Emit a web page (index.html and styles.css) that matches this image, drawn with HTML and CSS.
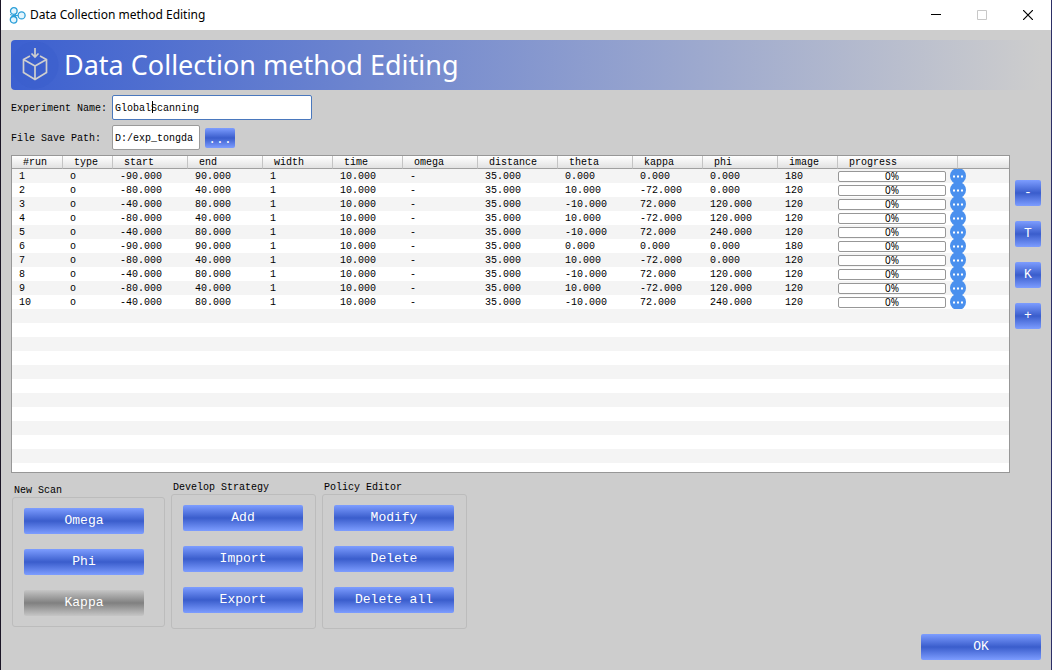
FILE: index.html
```
<!DOCTYPE html>
<html lang="en">
<head>
<meta charset="utf-8">
<title>Data Collection method Editing</title>
<link rel="stylesheet" href="styles.css">
</head>
<body>
<header class="titlebar">
  <svg class="app-icon" width="17" height="17" viewBox="0 0 17 17"><g fill="#e4f5fd" stroke="#2b9fd9" stroke-width="1.3"><circle cx="4.800" cy="4" r="3.300"/><circle cx="4.600" cy="12.800" r="3.300"/><circle cx="12.600" cy="8.400" r="3.500"/></g><path d="M1 7.500 4 8.500 2.500 10M4 8.500h5M6 7.200 7.500 8.500 6 9.800" fill="none" stroke="#2b9fd9"/></svg>
  <span class="app-name">Data Collection method Editing</span>
  <button class="win-btn" type="button" aria-label="Minimize"><svg width="10" height="10" viewBox="0 0 10 10"><path d="M0 4.500h10" stroke="#000"/></svg></button>
  <button class="win-btn" type="button" aria-label="Maximize" disabled><svg width="10" height="10" viewBox="0 0 10 10"><path d="M.5.5h9v9h-9z" fill="none" stroke="#c8c8c8"/></svg></button>
  <button class="win-btn" type="button" aria-label="Close"><svg width="10" height="10" viewBox="0 0 10 10"><path d="M0 0 10 10M10 0 0 10" stroke="#000" stroke-width="1.2"/></svg></button>
</header>
<main class="content">
  <div class="banner">
    <svg class="banner-icon" width="48" height="48" viewBox="0 0 48 48"><circle cx="24" cy="24" r="23.500" fill="#3a5dcc" opacity=".5"/><g fill="none" stroke="#cfcfcf" stroke-width="1.700"><path d="M19 15 12.500 18.500v13L24 38.500l11.500-7v-13L29 15M12.500 18.500 24 25l11.500-6.500M24 25v13.500M24 7v9M20.500 12.500l3.500 3.500 3.500-3.500"/></g></svg>
    <h1 class="banner-title">Data Collection method Editing</h1>
  </div>
  <form class="fields">
    <label class="label" for="name">Experiment Name:</label>
    <span class="name-box"><input class="text name" id="name" type="text" value="GlobalScanning"><span class="caret"></span></span>
    <label class="label" for="path">File Save Path:</label>
    <span class="path-box"><input class="text path" id="path" type="text" value="D:/exp_tongda"><button class="btn browse" type="button" aria-label="Browse">...</button></span>
  </form>
  <div class="work">
    <div class="grid">
      <table class="runs">
        <colgroup><col class="c51"><col class="c50"><col class="c75"><col class="c75"><col class="c70"><col class="c70"><col class="c75"><col class="c80"><col class="c75"><col class="c70"><col class="c75"><col class="c60"><col class="c120"><col></colgroup>
        <thead><tr><th>#run</th><th>type</th><th>start</th><th>end</th><th>width</th><th>time</th><th>omega</th><th>distance</th><th>theta</th><th>kappa</th><th>phi</th><th>image</th><th>progress</th><th></th></tr></thead>
        <tbody id="rows"></tbody>
      </table>
    </div>
    <div class="side">
      <button class="btn square" type="button">-</button>
      <button class="btn square" type="button">T</button>
      <button class="btn square" type="button">K</button>
      <button class="btn square" type="button">+</button>
    </div>
  </div>
  <div class="bottom">
    <section class="group scan">
      <h2 class="group-title">New Scan</h2>
      <div class="group-box">
        <button class="btn wide" type="button">Omega</button>
        <button class="btn wide" type="button">Phi</button>
        <button class="btn wide" type="button" disabled>Kappa</button>
      </div>
    </section>
    <section class="group">
      <h2 class="group-title">Develop Strategy</h2>
      <div class="group-box">
        <button class="btn wide" type="button">Add</button>
        <button class="btn wide" type="button">Import</button>
        <button class="btn wide" type="button">Export</button>
      </div>
    </section>
    <section class="group">
      <h2 class="group-title">Policy Editor</h2>
      <div class="group-box">
        <button class="btn wide" type="button">Modify</button>
        <button class="btn wide" type="button">Delete</button>
        <button class="btn wide" type="button">Delete all</button>
      </div>
    </section>
    <button class="btn wide ok" type="button">OK</button>
  </div>
</main>
<script src="app.js"></script>
</body>
</html>
```
FILE: styles.css
```
* { box-sizing: border-box; }
body {
  margin: 0;
  min-height: 100vh;
  display: flex;
  flex-direction: column;
  background: #cdcdcd;
  border-left: 1px solid #1a1526;
  border-right: 1px solid #2c2f66;
  font: 10px/14px "Liberation Mono", monospace;
  color: #000;
}
button, input { font: inherit; color: inherit; }
svg { display: block; }

.titlebar {
  height: 30px;
  display: flex;
  align-items: center;
  background: #fff;
  padding-left: 8px;
  font: 12px/16px "Noto Sans", sans-serif;
}
.app-name { flex: 1; margin-left: 4px; }
.win-btn {
  width: 46px;
  height: 30px;
  padding: 0;
  border: 0;
  background: none;
  display: flex;
  align-items: center;
  justify-content: center;
}

.content {
  flex: 1;
  display: flex;
  flex-direction: column;
  padding: 10px;
}
.banner {
  height: 50px;
  display: flex;
  align-items: center;
  border-radius: 4px;
  background: linear-gradient(90deg, #3c60d0, #cdcdcd);
}
.banner-title {
  margin: 0 0 0 5px;
  font: 27px/36px "Noto Sans", sans-serif;
  color: #fff;
}

.fields {
  display: grid;
  grid-template-columns: 96px 1fr;
  align-items: center;
  gap: 5px;
  margin-top: 5px;
}
.label { padding-top: 2px; }
.name-box { position: relative; width: 200px; }
.path-box { display: flex; align-items: center; gap: 5px; }
.text {
  display: block;
  height: 25px;
  padding: 1px 2px 0;
  border: 1px solid #9a9a9a;
  border-radius: 2px;
  background: #fff;
  outline: 0;
}
.name { width: 100%; border-color: #4a78bd; }
.path { width: 88px; }
.caret {
  position: absolute;
  left: 40px;
  top: 6px;
  width: 1px;
  height: 12px;
  background: #000;
}

.btn {
  height: 26px;
  padding: 0;
  border: 0;
  border-radius: 2px;
  background: linear-gradient(#7d9dff, #3a5dcc 50%, #7d9dff);
  color: #fff;
  font-size: 13px;
  line-height: 26px;
  text-align: center;
}
.btn:disabled { background: linear-gradient(#c6c6c6, #808080 50%, #c6c6c6); }
.wide { width: 120px; }
.square { width: 26px; }
.browse { width: 30px; height: 20px; padding-top: 4px; line-height: 16px; }

.work { flex: 1; display: flex; gap: 5px; margin-top: 5px; }
.grid {
  flex: 1;
  border: 1px solid #979797;
  background: repeating-linear-gradient(#f4f4f4 0 14px, #fff 14px 28px) 0 13px;
  background-clip: padding-box;
}
.runs { width: 100%; table-layout: fixed; border-collapse: separate; border-spacing: 0; }
.runs th {
  height: 13px;
  padding: 1px 0 0 11px;
  border-right: 1px solid #c4c4c4;
  border-bottom: 1px solid #a0a0a0;
  background: linear-gradient(#fff, #e2e2e2);
  font-weight: normal;
  line-height: 11px;
  text-align: left;
}
.runs th:last-child { border-right: 0; }
.runs td { height: 14px; padding: 2px 0 0 7px; line-height: 12px; white-space: pre; }
.runs .progress-cell { padding: 0; }
.c50 { width: 50px; }
.c51 { width: 51px; }
.c60 { width: 60px; }
.c70 { width: 70px; }
.c75 { width: 75px; }
.c80 { width: 80px; }
.c120 { width: 120px; }
.progress-line { display: flex; align-items: center; gap: 4px; }
.bar {
  width: 108px;
  height: 11px;
  border: 1px solid #979797;
  border-radius: 2px;
  background: #fff;
  font: 10px/8px "Noto Sans", sans-serif;
  text-align: center;
}
.more { width: 16px; height: 14px; padding: 0; border: 0; background: none; }

.side { display: flex; flex-direction: column; gap: 15px; padding-top: 25px; }

.bottom { display: flex; align-items: flex-start; gap: 6px; margin-top: 9px; padding-left: 1px; }
.group { margin-bottom: 31px; }
.group.scan { margin-top: 3px; }
.scan .group-box { width: 153px; height: 130px; }
.group-title { margin: 0; padding-left: 2px; font-size: 10px; font-weight: normal; line-height: 12px; }
.group-box {
  width: 145px;
  height: 135px;
  display: flex;
  flex-direction: column;
  gap: 15px;
  padding: 10px 11px;
  border: 1px solid #bcbcbc;
  border-radius: 3px;
}
.ok { margin-left: auto; align-self: flex-end; }
```
FILE: app.js
```
const runs = [
  ["1", "-90.000", "90.000", "0.000", "0.000", "0.000", "180"],
  ["2", "-80.000", "40.000", "10.000", "-72.000", "0.000", "120"],
  ["3", "-40.000", "80.000", "-10.000", "72.000", "120.000", "120"],
  ["4", "-80.000", "40.000", "10.000", "-72.000", "120.000", "120"],
  ["5", "-40.000", "80.000", "-10.000", "72.000", "240.000", "120"],
  ["6", "-90.000", "90.000", "0.000", "0.000", "0.000", "180"],
  ["7", "-80.000", "40.000", "10.000", "-72.000", "0.000", "120"],
  ["8", "-40.000", "80.000", "-10.000", "72.000", "120.000", "120"],
  ["9", "-80.000", "40.000", "10.000", "-72.000", "120.000", "120"],
  ["10", "-40.000", "80.000", "-10.000", "72.000", "240.000", "120"]
];
const dots = '<svg width="16" height="14" viewBox="0 1 16 14"><circle cx="8" cy="8" r="8" fill="#4a90ee"/><path d="M3 7.500h2v2H3zM7 7.500h2v2H7zM11 7.500h2v2h-2z" fill="#fff"/></svg>';
document.getElementById("rows").innerHTML = runs.map(([run, start, end, theta, kappa, phi, image]) => {
  const cells = [run, "o", start, end, "1", "10.000", "-", "35.000", theta, kappa, phi, image];
  return "<tr>" + cells.map(c => "<td>" + c + "</td>").join("") +
    '<td class="progress-cell" colspan="2"><div class="progress-line">' +
    '<div class="bar" role="progressbar" aria-label="Run ' + run + '" aria-valuenow="0">0%</div>' +
    '<button class="more" type="button" aria-label="Options for run ' + run + '">' + dots + "</button></div></td></tr>";
}).join("");
```
